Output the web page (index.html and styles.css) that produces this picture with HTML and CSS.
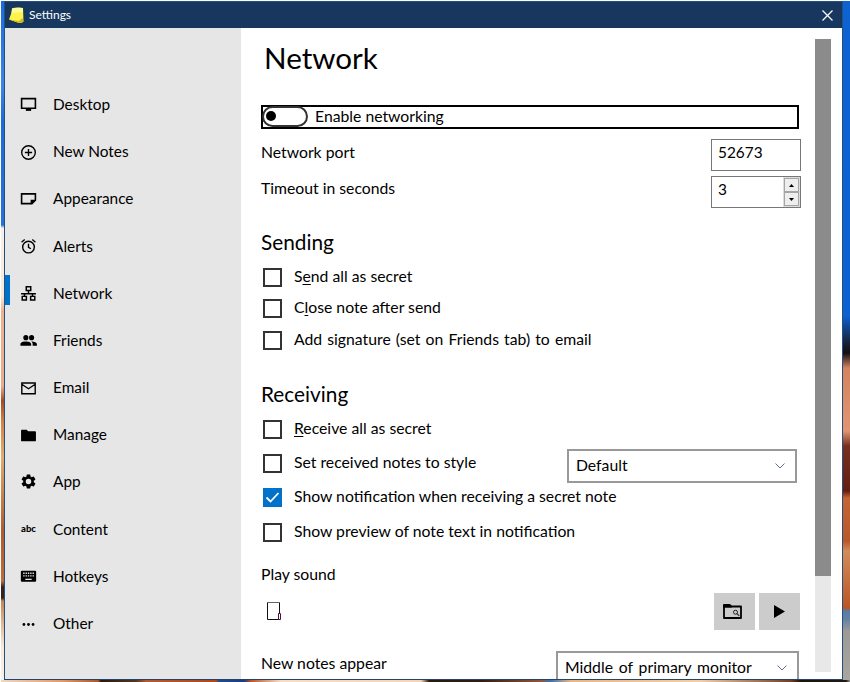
FILE: index.html
```html
<!DOCTYPE html>
<html lang="en">
<head>
<meta charset="utf-8">
<title>Settings</title>
<link rel="stylesheet" href="styles.css">
</head>
<body>
<div class="desktop">
<div class="wallpaper-left"></div>
<div class="window">
  <header class="titlebar">
    <svg class="note-icon" width="17" height="17" viewBox="0 0 17 17"><path d="M4 1.500Q8 0 15 1L15.500 14.500Q14 16 11 16L1 12.500Q3.500 7 4 1.500Z" fill="#fff34a"/><path d="M4 1.500Q9 .5 15 1L15 5L4 6Z" fill="#fffb9c"/><path d="M1 12.500L11 16Q14 16 15.500 14.500L14.500 11L11 14Z" fill="#d8b51c"/></svg>
    <span class="caption">Settings</span>
    <svg class="close" width="11" height="11" viewBox="0 0 11 11"><path d="M.5.5l10 10M10.500.5l-10 10" stroke="#fff" stroke-width="1.200"/></svg>
  </header>
  <div class="body">
    <nav class="sidebar">
      <a class="item"><svg viewBox="0 0 16 16"><path d="M1.500 2.500h13v9h-13z" fill="none" stroke="#000" stroke-width="1.500"/><path d="M5.500 12h5v2h-5z"/></svg><span>Desktop</span></a>
      <a class="item"><svg viewBox="0 0 16 16"><circle cx="8" cy="8" r="6.400" fill="none" stroke="#000" stroke-width="1.300"/><path d="M8 4.600v6.800M4.600 8h6.800" stroke="#000" stroke-width="1.300"/></svg><span>New Notes</span></a>
      <a class="item"><svg viewBox="0 0 16 16"><path d="M1.500 2.700h13v6l-3.300 3.200H1.500z" fill="none" stroke="#000" stroke-width="1.500"/><path d="M10 12.500V8.300h4.800z"/></svg><span>Appearance</span></a>
      <a class="item"><svg viewBox="0 0 16 16"><g fill="none" stroke="#000" stroke-width="1.300"><circle cx="8" cy="8.500" r="5.500"/><path d="M8 5.400v3.400l2.300 1.300M1.500 4l2.900-2.500M14.500 4l-2.900-2.500"/></g></svg><span>Alerts</span></a>
      <a class="item selected"><svg viewBox="0 0 16 16"><path d="M5.900 1.700h4.200v3.500H5.900zM2.100 10.700h3.900v3.400H2.100zM10 10.700h3.900v3.400H10zM8 5.300v2.900M1 8.200h14M4.200 8v2.700M11.800 8v2.700" fill="none" stroke="#000" stroke-width="1.400"/></svg><span>Network</span></a>
      <a class="item"><svg viewBox="0 0 16 16"><circle cx="5.500" cy="5.300" r="2.400"/><circle cx="10.900" cy="5.300" r="2.400"/><path d="M.4 12.900v-1.600C.4 9.800 3.200 9 5.500 9s5 .8 5 2.300v1.600zM11.200 9c2.200.1 4.700.9 4.700 2.300v1.600h-4v-1.600c0-1-.4-1.700-1.200-2.200z"/></svg><span>Friends</span></a>
      <a class="item"><svg viewBox="0 0 16 16"><path d="M1.700 2.800h12.600v10.200H1.700zM1.700 4L8 8.200 14.300 4" fill="none" stroke="#000" stroke-width="1.300"/></svg><span>Email</span></a>
      <a class="item"><svg viewBox="0 0 16 16"><path d="M1 3.300Q1 2.500 1.800 2.500h4.400l1.500 1.600h6.500q.8 0 .8.800v7.700q0 .8-.8.800H1.800q-.8 0-.8-.8z"/></svg><span>Manage</span></a>
      <a class="item"><svg class="up" viewBox="0 0 24 24"><path d="M12 15.900A3.900 3.900 0 1 1 12 8.100A3.900 3.900 0 0 1 12 15.900M19.430 12.970L21.540 14.630Q21.800 14.900 21.660 15.270L19.660 18.730Q19.400 19.100 19.050 18.950L16.560 17.950L14.870 18.930L14.500 21.580Q14.400 22 14 22H10Q9.600 22 9.500 21.580L9.130 18.930L7.440 17.950L4.950 18.950Q4.600 19.100 4.340 18.730L2.340 15.270Q2.200 14.900 2.460 14.630L4.570 12.970V11.030L2.460 9.370Q2.200 9.100 2.340 8.730L4.340 5.270Q4.600 4.900 4.950 5.050L7.440 6.050L9.130 5.070L9.500 2.420Q9.600 2 10 2H14Q14.400 2 14.500 2.420L14.870 5.070L16.560 6.050L19.050 5.050Q19.400 4.900 19.660 5.270L21.660 8.730Q21.800 9.100 21.540 9.370L19.430 11.030Z" fill-rule="evenodd"/></svg><span>App</span></a>
      <a class="item"><b class="abc">abc</b><span>Content</span></a>
      <a class="item"><svg viewBox="0 0 16 16"><rect x=".8" y="2.500" width="14.400" height="10.400" rx="1"/><path d="M3 4.900h10.500M3 7.400h10.500" stroke="#e6e6e6" stroke-width="1.300" stroke-dasharray="1.300 .9"/><path d="M5 10.700h6" stroke="#e6e6e6" stroke-width="1.200"/></svg><span>Hotkeys</span></a>
      <a class="item"><svg viewBox="0 0 16 16"><circle cx="3.700" cy="8" r="1.300"/><circle cx="8" cy="8" r="1.300"/><circle cx="12.300" cy="8" r="1.300"/></svg><span>Other</span></a>
    </nav>
    <main class="page">
      <div class="form">
        <h1>Network</h1>
        <label class="toggle"><i class="switch"></i><span>Enable networking</span></label>
        <div class="row port"><span>Network port</span><div class="field">52673</div></div>
        <div class="row timeout"><span>Timeout in seconds</span><div class="field spin">3<div class="spinner"><i><svg width="5" height="3"><path d="M2.500 0L5 3H0z"/></svg></i><i><svg width="5" height="3"><path d="M0 0h5L2.500 3z"/></svg></i></div></div></div>
        <h2>Sending</h2>
        <label class="check r31"><i></i><span>S<u>e</u>nd all as secret</span></label>
        <label class="check r32"><i></i><span>C<u>l</u>ose note after send</span></label>
        <label class="check r32"><i></i><span class="loose">Add signature (set on Friends tab) to email</span></label>
        <h2 class="second">Receiving</h2>
        <label class="check r34"><i></i><span><u>R</u>eceive all as secret</span></label>
        <div class="style-row">
          <label class="check"><i></i><span>Set received notes to style</span></label>
          <div class="select"><span>Default</span><svg width="10" height="6" viewBox="0 0 10 6"><path d="M.5.5L5 5 9.500.5" fill="none" stroke="#60708a"/></svg></div>
        </div>
        <label class="check r35"><i class="on"><svg width="19" height="19" viewBox="0 0 19 19"><path d="M3.500 9.500l4 4 8-8.500" fill="none" stroke="#fff" stroke-width="1.800"/></svg></i><span>Show notification when receiving a secret note</span></label>
        <label class="check r34"><i></i><span>Show preview of note text in notification</span></label>
        <div class="sound-label">Play sound</div>
        <div class="sound-row">
          <svg width="16" height="20" viewBox="0 0 16 20"><path d="M1.500 1.500h12v17h-12z" fill="none" stroke="#111"/><path d="M1 1.500h13" stroke="#666"/><path d="M12.500 12.500h2v6h-2z" fill="#fff" stroke="#4b1240"/></svg>
          <div class="buttons">
            <button><svg class="browse" width="21" height="17" viewBox="0 0 21 17"><path d="M2 3.500h17v11.500H2z" fill="none" stroke="#000" stroke-width="1.800" stroke-linejoin="round"/><path d="M1 1.800Q1 1 2 1h6l2 2v1.500H1z"/><circle cx="13.500" cy="9.200" r="2" fill="none" stroke="#222"/><path d="M15 10.700l2.200 2.200" stroke="#222" stroke-width="1.200"/></svg></button>
            <button><svg width="11" height="13"><path d="M0 0l11 6.500L0 13z"/></svg></button>
          </div>
        </div>
        <div class="row appear"><span>New notes appear</span><div class="select wide-select"><span class="loose">Middle of primary monitor</span><svg width="10" height="6" viewBox="0 0 10 6"><path d="M.5.5L5 5 9.500.5" fill="none" stroke="#60708a"/></svg></div></div>
      </div>
      <div class="scrollbar"><div class="thumb"></div></div>
    </main>
  </div>
</div>
<div class="wallpaper-right"></div>
<div class="wallpaper-bottom"></div>
</div>
</body>
</html>
```
FILE: styles.css
```css
* { box-sizing: border-box; }
body { margin: 0; background: #fff; overflow: hidden; color: #000; font: 15.4px/20px Lato, "Liberation Sans", sans-serif; }
i { font-style: normal; }
.desktop { display: grid; width: 850px; height: 682px; padding: 1px 0 0 1px; grid-template-columns: 3px 839px 7px; grid-template-rows: 679px 2px; }
.wallpaper-left { background: linear-gradient(#1b6cdb 0, #3a87ea 85px, #1b6cdb 120px, #2472dc 224px, #f5f1ec 227px, #f8ead8 295px, #efb28d 310px, #e9ad88 385px, #a84b22 400px, #d77f3f 420px, #e2ae6c 455px, #b45a2a 530px, #c06c38 580px, #32241c 586px, #33251d 597px, #c8864f 600px, #f5e9db 645px, #f8f2e9 679px); }
.wallpaper-right { background: linear-gradient(#0d63d1 0, #0b61cf 315px, #1a1a26 345px, #120e12 352px, #d4845f 367px, #e09570 430px, #77301f 445px, #641f12 490px, #c46535 497px, #b9572a 540px, #d18c5c 550px, #bb5425 607px, #587ca3 610px, #6382a2 618px, #9b9a97 630px, #aaa69f 679px); }
.wallpaper-bottom { grid-column: 1 / -1; background: linear-gradient(90deg, #e8d9c8 0, #e39b68 60px, #a65a31 97px, #241a13 100px, #4a3827 135px, #b15a31 145px, #a9491f 215px, #1b4c91 218px, #173e80 243px, #b7552d 250px, #f2dfc9 280px, #eed7bd 420px, #251a16 428px, #2c1d17 480px, #8e563c 540px, #3574b6 550px, #e6b887 570px, #efcfaa 700px, #6c4029 790px, #19130f 800px, #211913 845px, #999 849px); }
.window { display: flex; flex-direction: column; border: 1px solid #24507f; border-bottom-color: #24426d; background: #fff; }
.titlebar { display: flex; align-items: center; height: 26px; padding: 0 9px 0 3px; background: #17375e; color: #fff; }
.note-icon { margin-right: 4px; }
.caption { flex: 1; font-size: 12px; line-height: 16px; }
.body { display: flex; height: 651px; }
.sidebar { width: 236px; padding-top: 53.4px; background: #e6e6e6; }
.item { display: flex; align-items: center; height: 47.2px; padding-left: 15px; position: relative; }
.item svg, .abc { flex: none; width: 17px; height: 17px; margin-right: 16px; }
.item svg { overflow: visible; }
.item > span { margin-top: -2px; }
.item .up { transform: translateY(-1px); }
.abc { font: 900 9.5px/15px Lato, sans-serif; text-align: center; }
.selected::before { content: ""; position: absolute; left: 0; top: 5px; width: 5px; height: 30px; background: #0072c9; }
.page { display: flex; width: 601px; height: 651px; overflow: hidden; font-size: 15.75px; }
.form { width: 560px; margin-right: 14px; padding-left: 20px; }
.loose { word-spacing: 1.1px; }
.wide-select .loose { word-spacing: 1.8px; }
h1, h2 { margin: 0; font-weight: 400; }
h1 { height: 77px; padding: 11px 0 0 3px; font-size: 29.6px; line-height: 38px; }
.toggle { display: flex; align-items: center; width: 538px; height: 24px; border: 2px solid #000; }
.toggle span { margin-top: -2px; }
.switch { width: 46px; height: 21px; margin: -1px 7px 0 -1px; border: 2px solid #333; border-radius: 11px; padding: 3px 0 0 2px; }
.switch::before { content: ""; display: block; width: 10px; height: 10px; border-radius: 50%; background: #000; }
.row { display: flex; justify-content: space-between; width: 540px; }
.port { padding-top: 10px; height: 47px; }
.port > span { padding-top: 3px; }
.timeout { height: 50px; }
.timeout > span { padding-top: 2px; }
.field { width: 90px; height: 32px; border: 1px solid #777; padding: 2px 6px; font-size: 15.4px; }
.spin { display: flex; justify-content: space-between; padding-right: 0; padding-bottom: 0; }
.spinner { display: grid; width: 17px; height: 30px; margin: -2px 0 0; padding: 1px; background: #ddd; }
.spinner i { display: grid; place-items: center; border: 1px solid #a5a5a5; background: #eee; }
h2 { height: 42px; font-size: 20.8px; line-height: 30px; padding-top: 1px; }
.second { padding-top: 16px; height: 57px; }
.check { display: flex; align-items: flex-start; padding-left: 2px; }
.check i { flex: none; width: 19px; height: 19px; margin-right: 12px; border: 2px solid #333; }
.check i.on { border: 0; background: #0072c9; }
.check i svg { display: block; }
.check span { margin-top: -2px; }
.check u { text-decoration-thickness: 1px; text-underline-offset: 2px; }
.sound-label { height: 36px; padding-top: 7px; }
.r31 { height: 31px; }
.r32 { height: 32px; }
.r34 { height: 34px; }
.r35 { height: 35px; }
.style-row { display: flex; justify-content: space-between; width: 536px; height: 34px; }
.select { display: flex; align-items: center; justify-content: space-between; width: 230px; height: 34px; margin-top: -5px; padding: 0 10px 0 7px; border: 2px solid #999; background: #fff; }
.select span { margin-top: -2px; }
.sound-row { display: flex; justify-content: space-between; width: 539px; height: 58px; padding: 0 0 0 5px; }
.sound-row > svg { margin-top: 8px; }
.buttons { display: flex; gap: 4px; }
button { display: grid; place-items: center; width: 41px; height: 37px; border: 0; padding: 0; background: #ccc; }
.browse { margin-right: 4px; }
.appear { width: 538px; }
.appear > span { padding-top: 2px; }
.wide-select { width: 243px; margin: 0; }
.scrollbar { width: 16px; height: 633px; margin-top: 11px; background: #e8e8e8; }
.thumb { height: 537px; background: #8b8b8b; }
```
